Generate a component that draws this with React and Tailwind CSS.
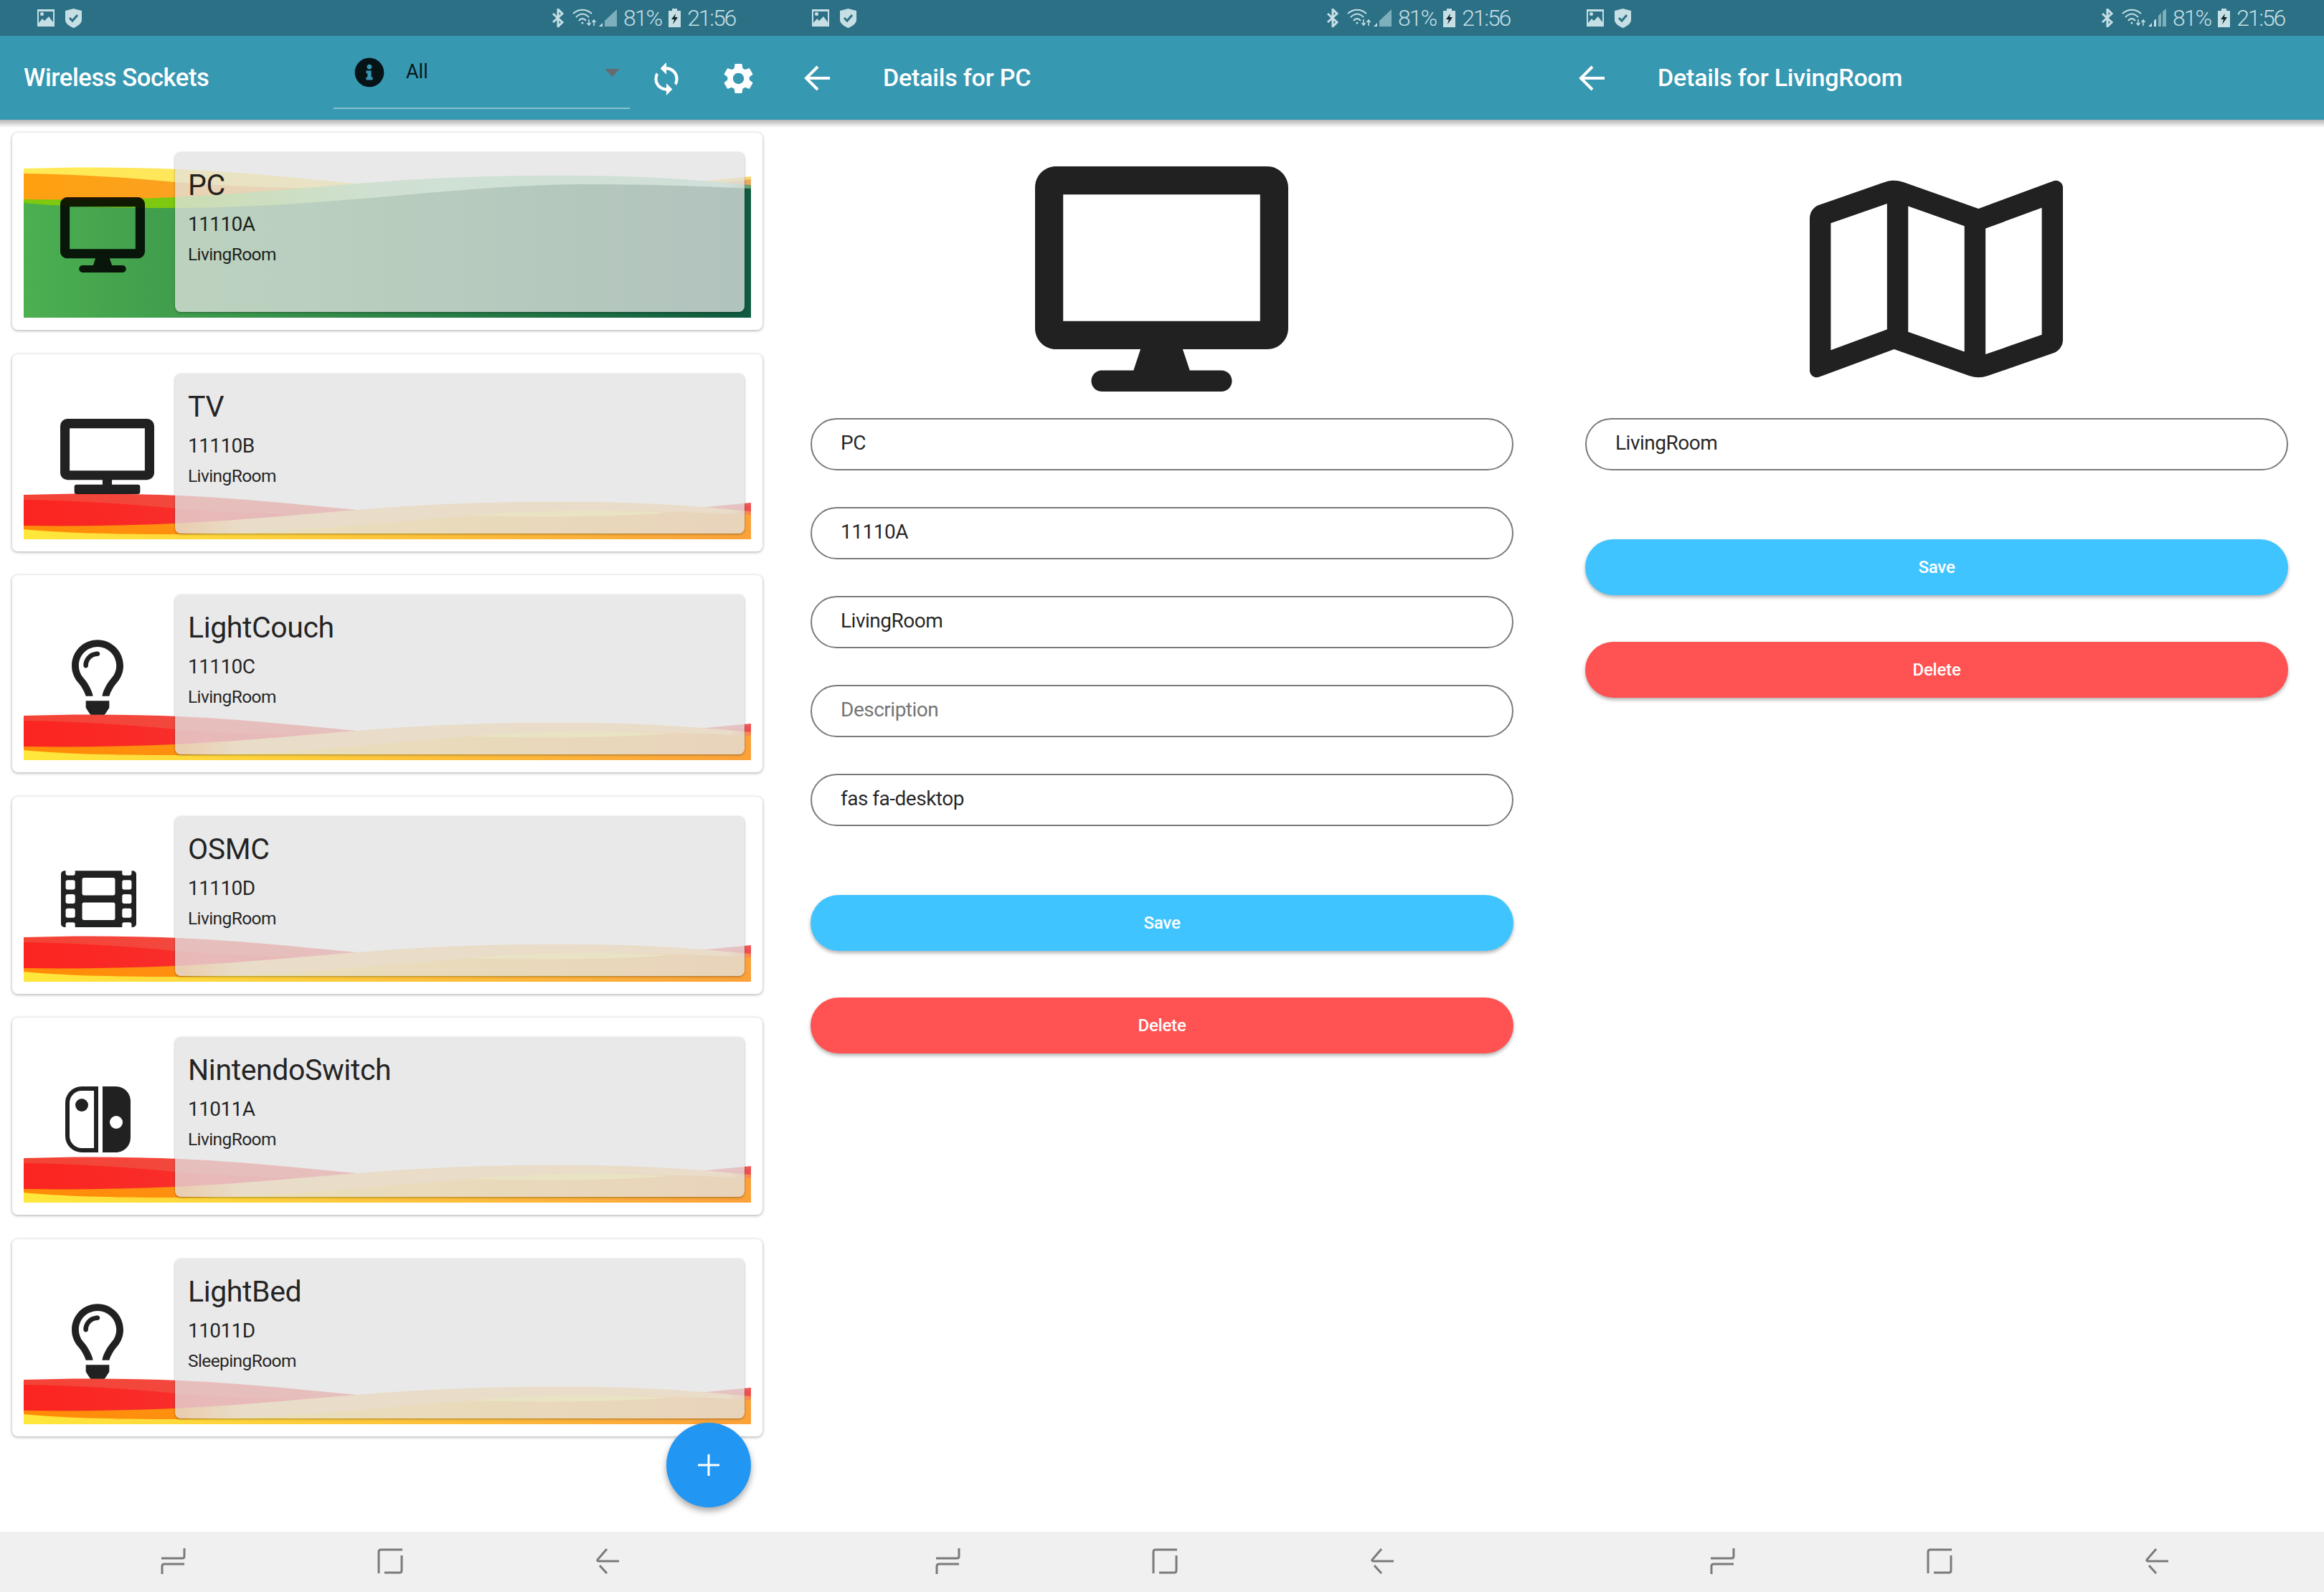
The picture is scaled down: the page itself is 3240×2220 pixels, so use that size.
import React from "react";
import { FaDesktop, FaTv, FaRegLightbulb, FaFilm, FaInfoCircle, FaRegMap } from "react-icons/fa";
import { MdSync, MdSettings } from "react-icons/md";

const THEMES = {
  green: {
    id: "g",
    layers: [
      [[0, "#ffeb55"], [1, "#fbd56e"]],
      [[0, "#ffa00f"], [1, "#e9a860"]],
      [[0, "#7cc90f"], [0.21, "#7cc90f"], [0.5, "#90d8a0"], [0.97, "#94d9b7"], [1, "#66996a"]],
      [[0, "#4caf50"], [1, "#0f5a40"]],
    ],
  },
  red: {
    id: "r",
    band: "#ffe664",
    layers: [
      [[0, "#f44336"], [1, "#ef5a5a"]],
      [[0, "#fb2420"], [1, "#ee5050"]],
      [[0, "#ff8c08"], [0.22, "#ff9010"], [0.3, "#ffc871"], [0.97, "#ffc871"], [1, "#f5804a"]],
      [[0, "#ffe83b"], [0.5, "#fdc53c"], [1, "#fba13a"]],
    ],
  },
};

// react-icons has no FA nintendo switch, so this one is drawn
const SwitchIcon = () => (
  <svg className="ml-[74px] h-[105px] w-[92px]" viewBox="0 0 92 105">
    <path d="M43 9H23C12 9 3 18 3 29V75C3 86 12 95 23 95H43Z" fill="none" stroke="currentColor" strokeWidth="6" />
    <circle cx="23" cy="32" r="9" fill="currentColor" />
    <path d="M52 6H70C82 6 91 15 91 27V77C91 89 82 98 70 98H52Z" fill="currentColor" />
    <circle cx="71" cy="56" r="9" fill="#fff" />
  </svg>
);

const SOCKETS = [
  { name: "PC", code: "11110A", room: "LivingRoom", on: true, icon: <FaDesktop className="ml-[67px] h-[105px] w-[118px]" /> },
  { name: "TV", code: "11110B", room: "LivingRoom", icon: <FaTv className="ml-[67px] h-[105px] w-[131px]" /> },
  { name: "LightCouch", code: "11110C", room: "LivingRoom", icon: <FaRegLightbulb className="ml-[83px] h-[105px] w-[72px]" /> },
  { name: "OSMC", code: "11110D", room: "LivingRoom", icon: <FaFilm className="ml-[68px] h-[105px] w-[105px]" /> },
  { name: "NintendoSwitch", code: "11011A", room: "LivingRoom", icon: <SwitchIcon /> },
  { name: "LightBed", code: "11011D", room: "SleepingRoom", icon: <FaRegLightbulb className="ml-[83px] h-[105px] w-[72px]" /> },
];

const LAYERS = [
  "M0 2 C90 -1 200 0 300 8 C430 18 520 32 640 34 C780 36 900 24 1014 13 V210 H0 Z",
  "M0 9 C80 10 150 15 211 21 C320 30 480 32 620 32 C740 34 800 33 862 30 C930 27 980 22 1014 17 V210 H0 Z",
  "M0 45 C70 46 140 45 211 42 C320 37 420 26 518 19 C620 12 720 11 790 12 C880 13 950 19 1014 25 V210 H0 Z",
  "M0 50 C50 55 120 57 211 57 C340 57 470 44 587 34 C660 28 720 24 790 24 C880 24 950 27 1014 30 V210 H0 Z",
];

const BAND = "M620 31 C680 26 730 24 790 24 C830 24 870 25 900 27 C840 32 740 34 620 31 Z";

const Wave = ({ on }) => {
  const theme = on ? THEMES.green : THEMES.red;
  const height = on ? 210 : 64;
  return (
    <svg
      className="absolute left-4 bottom-[17px] w-[1014px]"
      height={height}
      viewBox={`0 0 1014 ${height}`}
      preserveAspectRatio="none"
    >
      <defs>
        {theme.layers.map((stops, i) => (
          <linearGradient key={i} id={`${theme.id}${i}`} x1="0" y1="0" x2="1" y2="0">
            {stops.map(([offset, color]) => (
              <stop key={offset} offset={offset} stopColor={color} />
            ))}
          </linearGradient>
        ))}
      </defs>
      {LAYERS.map((d, i) => (
        <path key={i} d={d} fill={`url(#${theme.id}${i})`} />
      ))}
      {theme.band && <path d={BAND} fill={theme.band} />}
    </svg>
  );
};

const SocketCard = ({ socket }) => (
  <div className="relative h-[275px] rounded-lg bg-white shadow-[0_1px_4px_rgba(0,0,0,0.35)]">
    <Wave on={socket.on} />
    <div className="relative flex pt-[27px]">
      <div className="w-[227px] pt-[63px] text-black/[0.87]">{socket.icon}</div>
      <div className="h-[223px] w-[794px] rounded-lg bg-[#e2e2e2]/[0.77] pl-[18px] pt-[22px] text-black/[0.87] shadow-[0_1px_3px_rgba(0,0,0,0.35)]">
        <div className="text-[41px] leading-[48px] tracking-[-0.4px]">{socket.name}</div>
        <div className="mt-[14px] text-[28px] leading-[34px] tracking-[-0.6px]">{socket.code}</div>
        <div className="mt-[10px] text-[24.5px] leading-[30px] tracking-[-0.6px]">{socket.room}</div>
      </div>
    </div>
  </div>
);

const StatusBar = ({ bars }) => (
  <div className="flex h-[50px] items-center justify-between bg-[#2b7085] pl-[51px] pr-[55px] text-[#c6dfe5]">
    <div className="flex items-center gap-[14px]">
      <svg width="26" height="26" viewBox="0 0 26 26">
        <path d="M1 1H25V25H1Z" fill="#c6dfe5" />
        <path d="M3 4H23V19L17 11L11 17L8 14L3 20Z" fill="#2b7085" />
        <circle cx="7.5" cy="7.5" r="2.5" fill="#c6dfe5" />
      </svg>
      <svg width="23" height="27" viewBox="0 0 23 27">
        <path d="M11.5 0L23 3V16C23 21 16 25 11.5 27C7 25 0 21 0 16V3Z" fill="#c6dfe5" />
        <path d="M6 13L10 17L17 9" fill="none" stroke="#2b7085" strokeWidth="3" />
      </svg>
    </div>
    <div className="flex items-center">
      <svg width="18" height="26" viewBox="0 0 18 26">
        <path d="M2 7L15 19L9 25V1L15 7L2 19" fill="none" stroke="#c6dfe5" strokeWidth="3" />
      </svg>
      <svg className="ml-[11px]" width="34" height="26" viewBox="0 0 34 26" fill="none" stroke="#c6dfe5" strokeWidth="2">
        <path d="M1 7C9 0 19 0 27 7" />
        <path d="M5 12C11 6 17 6 23 12" />
        <path d="M9 17C12 13 16 13 19 17" />
        <circle cx="14" cy="20" r="1.5" fill="#c6dfe5" stroke="none" />
        <path d="M23 15V23M20.500 20L23 23L25.500 20" strokeWidth="1.500" />
        <path d="M30 24V16M27.500 19L30 16L32.500 19" strokeWidth="1.500" />
      </svg>
      {bars ? (
        <svg className="ml-[3px]" width="25" height="26" viewBox="0 0 25 26">
          <path d="M0 25L5 20V25Z" fill="#c6dfe5" />
          <path d="M8 25V17L11 14V25Z" fill="#c6dfe5" />
          <path d="M14 25V10L18 6V25Z" fill="#7db0bc" />
          <path d="M20 25V4L25 0V25Z" fill="#7db0bc" />
        </svg>
      ) : (
        <svg className="ml-[3px]" width="25" height="26" viewBox="0 0 25 26">
          <path d="M0 25L5 20V25Z" fill="#c6dfe5" />
          <path d="M8 25V17L25 1V25Z" fill="#7db0bc" />
        </svg>
      )}
      <span className="ml-[9px] text-[32px] font-light leading-none tracking-[-2px]">81%</span>
      <svg className="ml-[10px]" width="17" height="26" viewBox="0 0 17 26">
        <path d="M5 0H12V3H17V26H0V3H5Z" fill="#c6dfe5" />
        <path d="M10 7L4 15H8L6 22L13 12H9Z" fill="#10242a" />
      </svg>
      <span className="ml-[9px] text-[32px] font-light leading-none tracking-[-2.2px]">21:56</span>
    </div>
  </div>
);

const NavBar = () => (
  <div className="flex h-[84px] items-center gap-[261px] bg-[#f0f0f0] pb-[3px] pl-[223px]">
    <svg width="40" height="40" viewBox="0 0 40 40" fill="none" stroke="#7a7a7a" strokeWidth="3">
      <path d="M34 2V13Q34 16 31 16H2" />
      <path d="M34 24H6Q3 24 3 27V38" />
    </svg>
    <svg width="40" height="40" viewBox="0 0 40 40" fill="none" stroke="#7a7a7a" strokeWidth="3">
      <path d="M37 4H7Q4 4 4 7V37" />
      <path d="M36 12V33Q36 36 33 36H12" />
    </svg>
    <svg width="40" height="40" viewBox="0 0 40 40" fill="none" stroke="#7a7a7a" strokeWidth="3">
      <path d="M21 3L8 18Q7 20 10 20H38" />
      <path d="M11 26L21 37" />
    </svg>
  </div>
);

const Panel = ({ bars, header, children }) => (
  <div className="flex h-[2220px] flex-col bg-white">
    <StatusBar bars={bars} />
    <div className="flex h-[117px] items-center bg-[#3798b1] text-white">{header}</div>
    <div className="relative flex-1">
      {children}
      {/* header shadow, a strip so it runs on unbroken from panel to panel */}
      <div className="absolute inset-x-0 top-0 h-[11px] bg-gradient-to-b from-black/30 to-transparent" />
    </div>
    <NavBar />
  </div>
);

const DetailHeader = ({ title }) => (
  <>
    <svg className="ml-[40px]" width="38" height="38" viewBox="0 0 38 38" fill="none" stroke="#fff" strokeWidth="4">
      <path d="M37 19H4" />
      <path d="M20 3L4 19L20 35" />
    </svg>
    <span className="ml-[73px] text-[34px] font-medium tracking-[-0.2px]">{title}</span>
  </>
);

const Field = ({ value, placeholder }) => (
  <div
    className={`flex h-[73px] items-center rounded-full border-2 border-[#7a7a7a] pb-[3px] pl-[40px] text-[28px] tracking-[-0.5px] ${
      placeholder ? "text-[#757575]" : "text-black/[0.87]"
    }`}
  >
    {value || placeholder}
  </div>
);

const Buttons = () => (
  <div className="mt-[96px] flex flex-col gap-[65px]">
    <button className="h-[78px] rounded-full bg-[#40c4ff] pb-[1px] text-[24px] font-medium tracking-[-0.2px] text-white shadow-[0_3px_5px_rgba(0,0,0,0.3)]">
      Save
    </button>
    <button className="h-[78px] rounded-full bg-[#ff5252] pb-[1px] text-[24px] font-medium tracking-[-0.2px] text-white shadow-[0_3px_5px_rgba(0,0,0,0.3)]">
      Delete
    </button>
  </div>
);

const DetailBody = ({ icon, children }) => (
  <div className="flex flex-col px-[50px] pt-[64px]">
    <div className="flex justify-center pr-[2px] text-[#212121]">{icon}</div>
    <div className="mt-[36px] flex flex-col gap-[51px]">{children}</div>
    <Buttons />
  </div>
);

const App = () => (
  <div className="grid w-[3240px] grid-cols-3 font-['Roboto',sans-serif]">
    <Panel
      header={
        <>
          <span className="ml-[33px] w-[432px] text-[34.5px] font-medium tracking-[-0.4px]">Wireless Sockets</span>
          <div className="relative flex h-[117px] w-[413px] pl-[29px] pt-[30px]">
            <FaInfoCircle className="h-[42px] w-[42px] text-black/[0.87]" />
            <span className="ml-[30px] mt-[2px] text-[27px] leading-[36px] text-black/[0.87]">All</span>
            <div className="absolute left-0 top-[100px] h-[2px] w-[413px] bg-white/40" />
            <svg className="absolute right-[14px] top-[46px]" width="21" height="11" viewBox="0 0 21 11">
              <path d="M0 0H21L10.500 11Z" fill="#656b70" />
            </svg>
          </div>
          <MdSync className="ml-[26px] mt-[2px] h-[50px] w-[50px]" />
          <MdSettings className="ml-[50px] mt-[2px] h-[51px] w-[51px]" />
        </>
      }
    >
      <div className="flex flex-col gap-[33.600px] px-[17px] pt-[18px]">
        {SOCKETS.map((socket) => (
          <SocketCard key={socket.name} socket={socket} />
        ))}
      </div>
      <button className="absolute bottom-[34px] right-[33px] flex h-[118px] w-[118px] items-center justify-center rounded-full bg-[#2196f3] shadow-[0_5px_10px_rgba(0,0,0,0.35)]">
        <svg width="30" height="30" viewBox="0 0 30 30" stroke="#fff" strokeWidth="3">
          <path d="M15 0V30M0 15H30" />
        </svg>
      </button>
    </Panel>

    <Panel header={<DetailHeader title="Details for PC" />}>
      <DetailBody icon={<FaDesktop className="h-[316px] w-[353px]" />}>
        <Field value="PC" />
        <Field value="11110A" />
        <Field value="LivingRoom" />
        <Field placeholder="Description" />
        <Field value="fas fa-desktop" />
      </DetailBody>
    </Panel>

    <Panel bars header={<DetailHeader title="Details for LivingRoom" />}>
      <DetailBody icon={<FaRegMap className="h-[316px] w-[353px]" />}>
        <Field value="LivingRoom" />
      </DetailBody>
    </Panel>
  </div>
);

export default App;
